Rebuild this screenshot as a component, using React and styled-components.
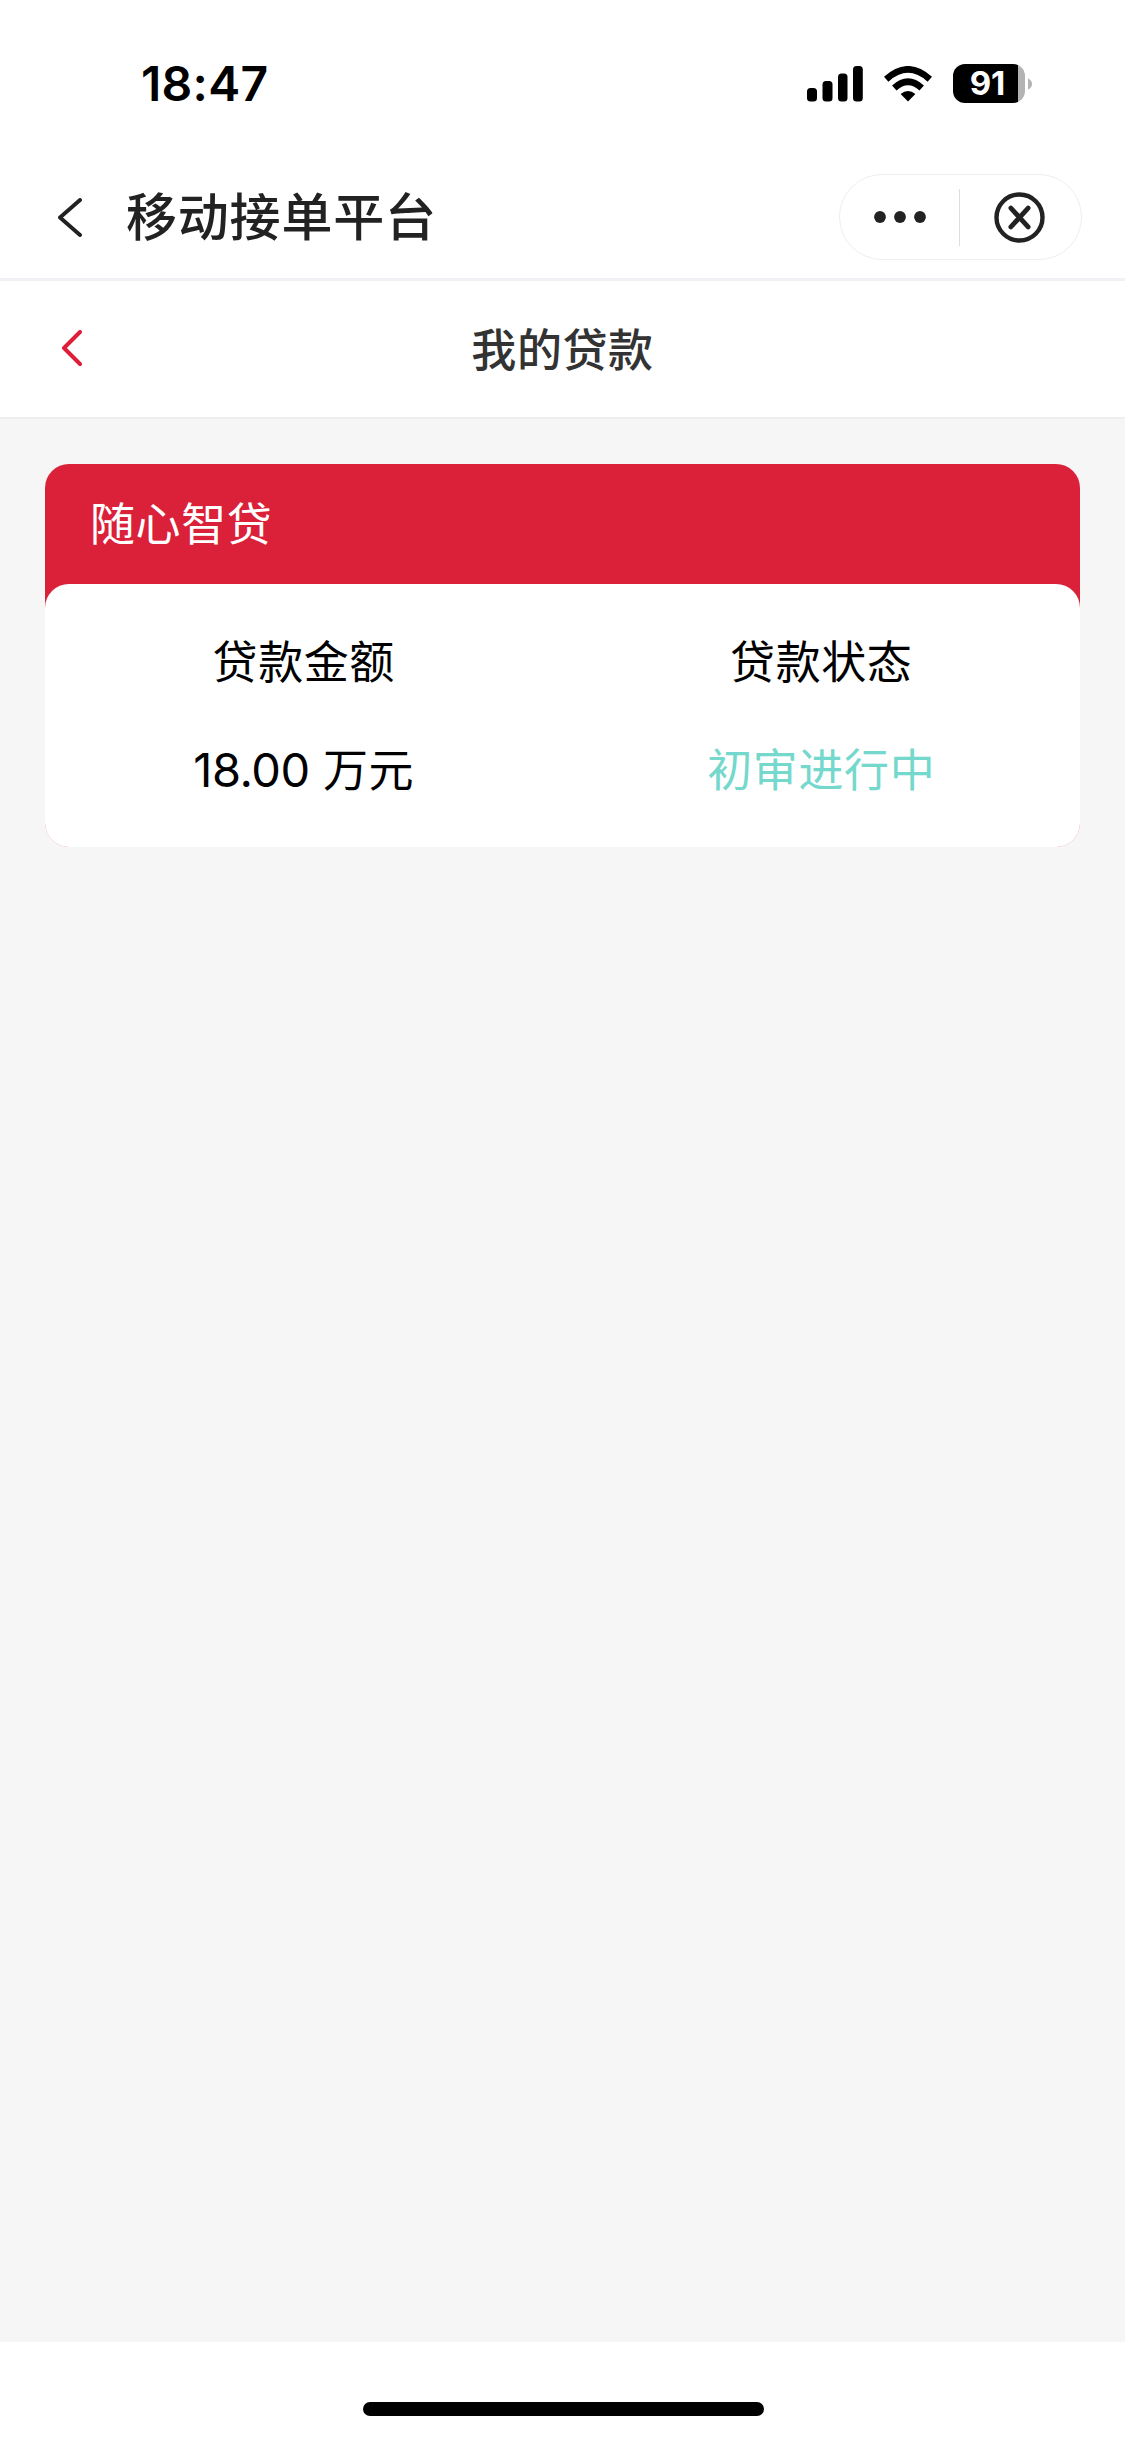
import styled, { createGlobalStyle } from "styled-components";

const GlobalStyle = createGlobalStyle`
  * {
    margin: 0;
    padding: 0;
    box-sizing: border-box;
  }

  body {
    background-color: #ffffff;
    font-family: Inter, "Noto Sans CJK SC", sans-serif;
  }

  svg {
    display: block;
    flex-shrink: 0;
  }
`;

const Screen = styled.div`
  width: 1125px;
  height: 2439px;
  display: flex;
  flex-direction: column;
  background-color: #ffffff;
  overflow: hidden;
`;

const StatusBar = styled.div`
  height: 156px;
  padding: 11px 93px 0 141px;
  display: flex;
  align-items: center;
  justify-content: space-between;
`;

const Time = styled.span`
  font-size: 48px;
  line-height: 60px;
  font-weight: 600;
  letter-spacing: 0.3px;
  color: #000000;
`;

const StatusIcons = styled.div`
  display: flex;
  align-items: center;
`;

const Battery = styled.div`
  width: 72px;
  height: 39px;
  margin-left: 21px;
  margin-right: 3px;
  padding-right: 3px;
  border-radius: 12px;
  background: linear-gradient(to right, #000000 65px, #b3b3b3 65px);
  color: #ffffff;
  font-size: 33px;
  line-height: 39px;
  font-weight: 700;
  text-align: center;
`;

const NavBar = styled.header`
  height: 125px;
  padding: 0 43px 0 58px;
  display: flex;
  align-items: center;
  border-bottom: 3px solid #f0f0f5;
`;

const NavTitle = styled.h1`
  flex: 1;
  margin-left: 44px;
  padding-top: 2px;
  font-size: 51px;
  line-height: 60px;
  font-weight: 500;
  letter-spacing: 0.8px;
  color: #222222;
`;

const Capsule = styled.div`
  width: 243px;
  height: 86px;
  padding-right: 2px;
  border: 1.5px solid #eeeeee;
  border-radius: 43px;
  display: flex;
  align-items: center;
`;

const CapsuleButton = styled.div`
  flex: 1;
  display: flex;
  justify-content: center;
`;

const CapsuleDivider = styled.div`
  width: 1px;
  height: 57px;
  background-color: #dddddd;
`;

const PageHeader = styled.div`
  height: 138px;
  padding: 0 62px 2px;
  display: grid;
  grid-template-columns: 20px 1fr 20px;
  align-items: center;
  border-bottom: 2px solid #eeeeee;
`;

const PageTitle = styled.h2`
  padding-top: 5px;
  font-size: 45px;
  line-height: 54px;
  font-weight: 500;
  letter-spacing: 0.6px;
  text-align: center;
  color: #333333;
`;

const Content = styled.main`
  flex: 1;
  padding: 45px;
  background-color: #f6f6f6;
`;

const Card = styled.section`
  border-radius: 24px;
  background: linear-gradient(#da2139 200px, #f0a6b0 200px);
  overflow: hidden;
`;

const CardTitle = styled.h3`
  height: 120px;
  padding-left: 45px;
  font-size: 45px;
  line-height: 121px;
  font-weight: 400;
  letter-spacing: 0.6px;
  color: #ffffff;
`;

const CardBody = styled.div`
  height: 263px;
  padding-top: 26px;
  display: grid;
  grid-template-columns: 1fr 1fr;
  grid-auto-rows: 108px;
  border-radius: 24px;
  background-color: #ffffff;
`;

const Cell = styled.p`
  font-size: 45px;
  line-height: 106px;
  letter-spacing: 0.6px;
  text-align: center;
  color: ${(props) => props.$color || "#000000"};
`;

const Amount = styled.span`
  font-size: 47px;
  line-height: 1;
  letter-spacing: -0.5px;
`;

const HomeArea = styled.footer`
  height: 97px;
  padding: 60px 0 0 1px;
  display: flex;
  justify-content: center;
`;

const HomeIndicator = styled.div`
  width: 401px;
  height: 14px;
  border-radius: 7px;
  background-color: #000000;
`;

const SignalIcon = () => (
  <svg width="56" height="36" viewBox="0 0 56 36">
    <rect x="0" y="22" width="10" height="13.5" rx="3.5" />
    <rect x="15.5" y="15" width="10" height="20.5" rx="3.5" />
    <rect x="31" y="7.5" width="9.5" height="28" rx="3.5" />
    <rect x="46" y="0" width="9.8" height="35.5" rx="3.5" />
  </svg>
);

const WifiIcon = styled.svg`
  margin-left: 21px;
`;

const Wifi = () => (
  <WifiIcon width="48" height="36" viewBox="0 0 48 36">
    <path d="M24 35.5L16.6 28Q24 21.8 31.4 28Z" />
    <g fill="none" stroke="#000000" strokeWidth="6.6">
      <path d="M10.3 22Q24 9.6 37.7 22" />
      <path d="M2.2 13.2Q24 -6.4 45.8 13.2" />
    </g>
  </WifiIcon>
);

const BatteryCap = () => (
  <svg width="4" height="12" viewBox="0 0 4 12">
    <path d="M0 0.5Q4 2.2 4 6Q4 9.8 0 11.5Z" fill="#b3b3b3" />
  </svg>
);

const BackIcon = ({ width, height, color }) => (
  <svg
    width={width}
    height={height}
    viewBox={`0 0 ${width} ${height}`}
    fill="none"
    stroke={color}
    strokeWidth="3.9"
    strokeLinecap="round"
    strokeLinejoin="round"
  >
    <path
      d={`M${width - 2} 2L2 ${height / 2}L${width - 2} ${height - 2}`}
    />
  </svg>
);

const MoreIcon = () => (
  <svg width="52" height="12" viewBox="0 0 52 12" fill="#222222">
    <circle cx="6" cy="6" r="5.9" />
    <circle cx="26" cy="6" r="5.9" />
    <circle cx="46" cy="6" r="5.9" />
  </svg>
);

const CloseIcon = () => (
  <svg
    width="51"
    height="51"
    viewBox="0 0 51 51"
    fill="none"
    stroke="#222222"
    strokeWidth="4.4"
    strokeLinecap="round"
  >
    <circle cx="25.5" cy="25.5" r="23" />
    <path
      d="M16.9 16.1L34.1 34.9M34.1 16.1L16.9 34.9"
      strokeWidth="4.8"
    />
  </svg>
);

function App() {
  return (
    <>
      <GlobalStyle />
      <Screen>
        <StatusBar>
          <Time>18:47</Time>
          <StatusIcons>
            <SignalIcon />
            <Wifi />
            <Battery>91</Battery>
            <BatteryCap />
          </StatusIcons>
        </StatusBar>
        <NavBar>
          <BackIcon width={24} height={39} color="#222222" />
          <NavTitle>移动接单平台</NavTitle>
          <Capsule>
            <CapsuleButton>
              <MoreIcon />
            </CapsuleButton>
            <CapsuleDivider />
            <CapsuleButton>
              <CloseIcon />
            </CapsuleButton>
          </Capsule>
        </NavBar>
        <PageHeader>
          <BackIcon width={20} height={36} color="#de1f39" />
          <PageTitle>我的贷款</PageTitle>
        </PageHeader>
        <Content>
          <Card>
            <CardTitle>随心智贷</CardTitle>
            <CardBody>
              <Cell>贷款金额</Cell>
              <Cell>贷款状态</Cell>
              <Cell>
                <Amount>18.00</Amount> 万元
              </Cell>
              <Cell $color="#74d8cc">初审进行中</Cell>
            </CardBody>
          </Card>
        </Content>
        <HomeArea>
          <HomeIndicator />
        </HomeArea>
      </Screen>
    </>
  );
}

export default App;
